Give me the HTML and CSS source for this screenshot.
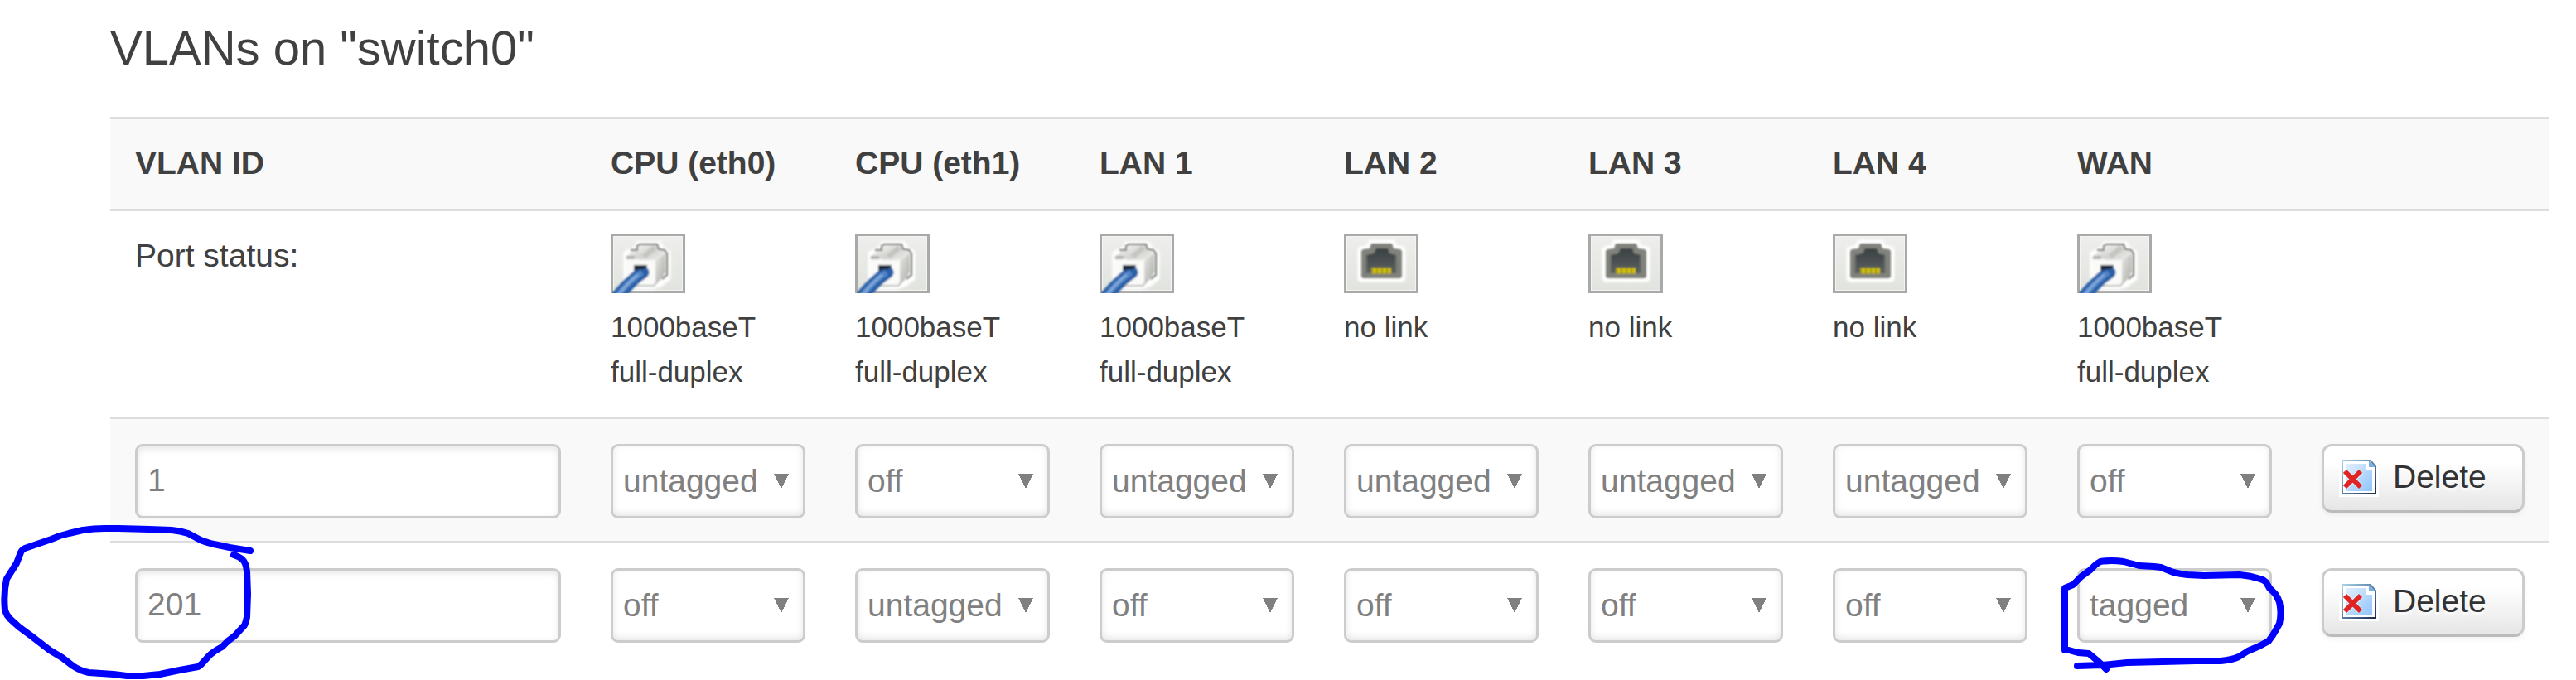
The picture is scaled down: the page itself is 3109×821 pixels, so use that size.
FILE: index.html
```html
<!DOCTYPE html>
<html lang="en">
<head>
    <meta charset="UTF-8">
    <meta name="viewport" content="width=device-width, initial-scale=1.0">
    <title>Switch - VLANs</title>
    <link rel="stylesheet" href="styles.css">
</head>
<body>
    <!-- icon definitions -->
    <svg class="defs" width="0" height="0" aria-hidden="true">
        <defs>
            <linearGradient id="tile" x1="0" y1="0" x2="0" y2="1">
                <stop offset="0" stop-color="#eeeeec"/>
                <stop offset="1" stop-color="#e1e4de"/>
            </linearGradient>
            <linearGradient id="plugSide" x1="0" y1="0" x2="1" y2="1">
                <stop offset="0" stop-color="#e8e8e5"/>
                <stop offset="1" stop-color="#a9aba5"/>
            </linearGradient>
            <linearGradient id="plugTop" x1="0" y1="0" x2="1" y2="1">
                <stop offset="0" stop-color="#ffffff"/>
                <stop offset="0.5" stop-color="#d3d4d0"/>
                <stop offset="1" stop-color="#f4f4f2"/>
            </linearGradient>
            <linearGradient id="socket" x1="0" y1="0" x2="0" y2="1">
                <stop offset="0" stop-color="#3a4043"/>
                <stop offset="1" stop-color="#5c605f"/>
            </linearGradient>
            <linearGradient id="sheetEdge" x1="0" y1="0" x2="1" y2="1">
                <stop offset="0" stop-color="#a9d3e6"/>
                <stop offset="0.5" stop-color="#5b7fa6"/>
                <stop offset="1" stop-color="#1c2c4c"/>
            </linearGradient>
            <linearGradient id="sheetFill" x1="0" y1="0" x2="1" y2="1">
                <stop offset="0" stop-color="#e3f0fd"/>
                <stop offset="1" stop-color="#8ec4fb"/>
            </linearGradient>
            <filter id="soft" x="-20%" y="-20%" width="140%" height="140%">
                <feGaussianBlur stdDeviation="1.5"/>
            </filter>
            <filter id="edge" x="-10%" y="-10%" width="120%" height="120%">
                <feGaussianBlur stdDeviation="0.9"/>
            </filter>
        </defs>
        <symbol id="port-up" viewBox="0 0 90 72">
            <rect width="90" height="72" fill="#a9a9a9"/>
            <rect x="3" y="3" width="84" height="66" fill="#f4f4f3"/>
            <rect x="4" y="4" width="82" height="64" fill="url(#tile)"/>
            <path d="M18 24l12-6 3-6h26l3 6 8 5v31l-10 8-9 3H18z" fill="#fff" stroke="#fff" stroke-width="5" filter="url(#soft)"/>
            <path d="M16 30v26" stroke="#c4c6c1" stroke-width="2" filter="url(#edge)"/>
            <g filter="url(#edge)">
                <path d="M18 29l8-8h7v-7h24v7l8 1-11 14-36-2z" fill="url(#plugTop)"/>
                <path d="M54 34l12-11v24L54 62z" fill="url(#plugSide)"/>
                <path d="M18 30h10l8 2h18v30H18z" fill="#fafaf9"/>
                <path d="M19 29h10" stroke="#b0b2ad" stroke-width="4" fill="none"/>
                <path d="M40 28l13-11" stroke="#c3c5c0" stroke-width="6" fill="none"/>
                <path d="M24 20h8v-5l3-2h21l2 6 7 1 3 4v26l-6 5" stroke="#777974" stroke-width="2" fill="none"/>
                <path d="M18 63h34l12-13" stroke="#c0c2bd" stroke-width="2" fill="none"/>
                <path d="M28 38h16v9H28z" fill="#1f2732"/>
                <path d="M39 47C29 53 21 61 8 76" stroke="#2c5fa6" stroke-width="15" stroke-linecap="round" fill="none"/>
                <path d="M28 38h15l-3 5-11 1z" fill="#1c2838"/>
                <path d="M38 47C28 53 20 61 8 75" stroke="#4f83c6" stroke-width="7" fill="none"/>
                <path d="M33 50C27 54 19 62 8 75" stroke="#83abdb" stroke-width="3" fill="none"/>
            </g>
        </symbol>
        <symbol id="port-down" viewBox="0 0 90 72">
            <rect width="90" height="72" fill="#a9a9a9"/>
            <rect x="3" y="3" width="84" height="66" fill="#f4f4f3"/>
            <rect x="4" y="4" width="82" height="64" fill="url(#tile)"/>
            <path d="M33 12h25l2 6 10 2v34H21V20l10-2z" fill="#fff" stroke="#fff" stroke-width="9" stroke-linejoin="round" filter="url(#soft)"/>
            <g filter="url(#edge)">
                <path d="M33 12h25l2 6 8 1 2 2v31l-2 2H23l-2-2V21l2-2 8-1z" fill="#80827c"/>
                <path d="M39 18h14l2 6 8 2v22H27V26l9-2z" fill="url(#socket)"/>
                <path d="M27 28v20M63 28v20" stroke="#6c6f6b" stroke-width="2"/>
                <path d="M33 41h24v8H33z" fill="#a3981d"/>
                <path d="M37 42v6M43 42v6M49 42v6M55 42v6" stroke="#dcc80c" stroke-width="3"/>
            </g>
        </symbol>
        <symbol id="remove" viewBox="0 0 48 48">
            <rect width="48" height="48" fill="#fff"/>
            <path d="M4 4h34l6 7v33H4z" fill="#fff" stroke="url(#sheetEdge)" stroke-width="2"/>
            <path d="M8 8h25v8h7v25H8z" fill="url(#sheetFill)"/>
            <path d="M36 4v8h8z" fill="#78aee0"/>
            <path d="M7 17l19 19M26 17L7 36" stroke="#fff" stroke-width="8" opacity="0.5"/>
            <path d="M7 17l19 19M26 17L7 36" stroke="#df2424" stroke-width="6"/>
        </symbol>
    </svg>

    <div class="container">
        <h1>VLANs on "switch0"</h1>

        <table class="vlans">
            <colgroup>
                <col>
                <col class="port" span="7">
                <col class="actions">
            </colgroup>
            <thead>
                <tr>
                    <th>VLAN ID</th>
                    <th>CPU (eth0)</th>
                    <th>CPU (eth1)</th>
                    <th>LAN 1</th>
                    <th>LAN 2</th>
                    <th>LAN 3</th>
                    <th>LAN 4</th>
                    <th>WAN</th>
                    <td></td>
                </tr>
            </thead>
            <tbody>
                <tr class="status">
                    <td>Port status:</td>
                    <td><svg class="port-icon"><use href="#port-up"/></svg><small>1000baseT<br>full-duplex</small></td>
                    <td><svg class="port-icon"><use href="#port-up"/></svg><small>1000baseT<br>full-duplex</small></td>
                    <td><svg class="port-icon"><use href="#port-up"/></svg><small>1000baseT<br>full-duplex</small></td>
                    <td><svg class="port-icon"><use href="#port-down"/></svg><small>no link</small></td>
                    <td><svg class="port-icon"><use href="#port-down"/></svg><small>no link</small></td>
                    <td><svg class="port-icon"><use href="#port-down"/></svg><small>no link</small></td>
                    <td><svg class="port-icon"><use href="#port-up"/></svg><small>1000baseT<br>full-duplex</small></td>
                    <td></td>
                </tr>
                <tr class="vlan odd">
                    <td><input type="text" aria-label="VLAN ID" value="1"></td>
                    <td><select aria-label="CPU (eth0)"><option>off</option><option selected>untagged</option><option>tagged</option></select></td>
                    <td><select aria-label="CPU (eth1)"><option selected>off</option><option>untagged</option><option>tagged</option></select></td>
                    <td><select aria-label="LAN 1"><option>off</option><option selected>untagged</option><option>tagged</option></select></td>
                    <td><select aria-label="LAN 2"><option>off</option><option selected>untagged</option><option>tagged</option></select></td>
                    <td><select aria-label="LAN 3"><option>off</option><option selected>untagged</option><option>tagged</option></select></td>
                    <td><select aria-label="LAN 4"><option>off</option><option selected>untagged</option><option>tagged</option></select></td>
                    <td><select aria-label="WAN"><option selected>off</option><option>untagged</option><option>tagged</option></select></td>
                    <td><button type="button"><svg class="btn-icon"><use href="#remove"/></svg>Delete</button></td>
                </tr>
                <tr class="vlan">
                    <td>
                        <div class="marked">
                            <input type="text" aria-label="VLAN ID" value="201">
                            <svg class="mark" aria-hidden="true"><path d="M139-21L114-25 95-29Q86-31 79-34L64-42Q55-45 44-46L17-47-20-48H-36Q-50-48-63-46L-80-42-91-39-101-35-133-24Q-137-22-138-19L-143-6-155 13Q-159 30-157 51-155 57-151 61L-140 71-125 82-103 99-88 108-75 118Q-66 124-56 126L-26 128-10 130H10L30 128 54 123 76 119 80 116 90 105Q97 99 105 95L112 88 120 82 132 69Q134 65 135 59L136 31 135 4Q134-6 130-10 126-14 119-16"/></svg>
                        </div>
                    </td>
                    <td><select aria-label="CPU (eth0)"><option selected>off</option><option>untagged</option><option>tagged</option></select></td>
                    <td><select aria-label="CPU (eth1)"><option>off</option><option selected>untagged</option><option>tagged</option></select></td>
                    <td><select aria-label="LAN 1"><option selected>off</option><option>untagged</option><option>tagged</option></select></td>
                    <td><select aria-label="LAN 2"><option selected>off</option><option>untagged</option><option>tagged</option></select></td>
                    <td><select aria-label="LAN 3"><option selected>off</option><option>untagged</option><option>tagged</option></select></td>
                    <td><select aria-label="LAN 4"><option selected>off</option><option>untagged</option><option>tagged</option></select></td>
                    <td>
                        <div class="marked">
                            <select aria-label="WAN"><option>off</option><option>untagged</option><option selected>tagged</option></select>
                            <svg class="mark" aria-hidden="true"><path d="M0 118L30 117 60 114 103 113 143 112H173Q186 111 195 107L206 100 220 94 231 88 236 81 239 76 244 67Q247 54 244 41 242 35 239 31L232 24 228 17Q225 14 221 13 209 9 196 8L153 9 133 8Q124 7 116 5L101-1 93-2 75-3 56-8Q41-10 28-8 24-6 21-3L16 2 5 10-5 20-15 24V99L-10 99 1 102 14 103 20 108 27 114 35 122"/></svg>
                        </div>
                    </td>
                    <td><button type="button"><svg class="btn-icon"><use href="#remove"/></svg>Delete</button></td>
                </tr>
            </tbody>
        </table>
    </div>
</body>
</html>
```

FILE: styles.css
```css
* {
    margin: 0;
    padding: 0;
    box-sizing: border-box;
    font-family: Arial, 'Liberation Sans', sans-serif;
}

body {
    background: #fff;
    color: #404040;
    font-size: 39px;
    line-height: 54px;
}

.defs {
    position: absolute;
}

.container {
    min-height: 100vh;
    padding: 4px 32px 0 133px;
    overflow: hidden;
}

h1 {
    font-size: 58px;
    font-weight: normal;
    line-height: 108px;
    margin-bottom: 29px;
}

.vlans {
    width: 100%;
    table-layout: fixed;
    border-collapse: separate;
    border-spacing: 0;
}

.port {
    width: 295px;
}

.actions {
    width: 305px;
}

th,
td {
    padding: 27px 30px;
    border-top: 3px solid #ddd;
    text-align: left;
    vertical-align: top;
}

th {
    padding: 26px 30px 28px;
}

thead,
.odd {
    background: #f9f9f9;
}

.vlan td {
    padding-top: 30px;
}

.port-icon {
    display: block;
    width: 90px;
    height: 72px;
    margin-bottom: 14px;
}

small {
    display: block;
    font-size: 35px;
}

input,
select {
    display: block;
    width: 100%;
    height: 90px;
    padding: 0 12px 2px;
    border: 3px solid #ccc;
    border-radius: 9px;
    background: #fff;
    color: #808080;
    font-size: 39px;
    box-shadow: inset 0 3px 9px rgba(0, 0, 0, 0.1);
}

/* arrow is drawn with two half triangles */
select {
    appearance: none;
    background:
        linear-gradient(to top right, transparent 50%, #808080 50%) right 26px center / 9px 18px no-repeat,
        linear-gradient(to top left, transparent 50%, #808080 50%) right 17px center / 9px 18px no-repeat,
        #fff;
    box-shadow: inset 0 -3px 9px rgba(0, 0, 0, 0.1);
}

button {
    display: flex;
    align-items: center;
    gap: 17px;
    width: 100%;
    height: 83px;
    padding: 0 18px 3px;
    border: 3px solid #ccc;
    border-bottom-color: #bbb;
    border-radius: 12px;
    background: linear-gradient(#fff, #fff 25%, #e6e6e6);
    color: #333;
    font-size: 39px;
    text-shadow: 0 3px 3px rgba(255, 255, 255, 0.75);
    box-shadow: 0 3px 6px rgba(0, 0, 0, 0.05);
    cursor: pointer;
}

.btn-icon {
    width: 48px;
    height: 48px;
}

/* hand-drawn pen marks around a control */
.marked {
    position: relative;
}

.mark {
    position: absolute;
    top: 0;
    left: 0;
    width: 100%;
    height: 100%;
    overflow: visible;
    pointer-events: none;
    fill: none;
    stroke: #00f;
    stroke-width: 8px;
    stroke-linecap: round;
    stroke-linejoin: round;
}
```
